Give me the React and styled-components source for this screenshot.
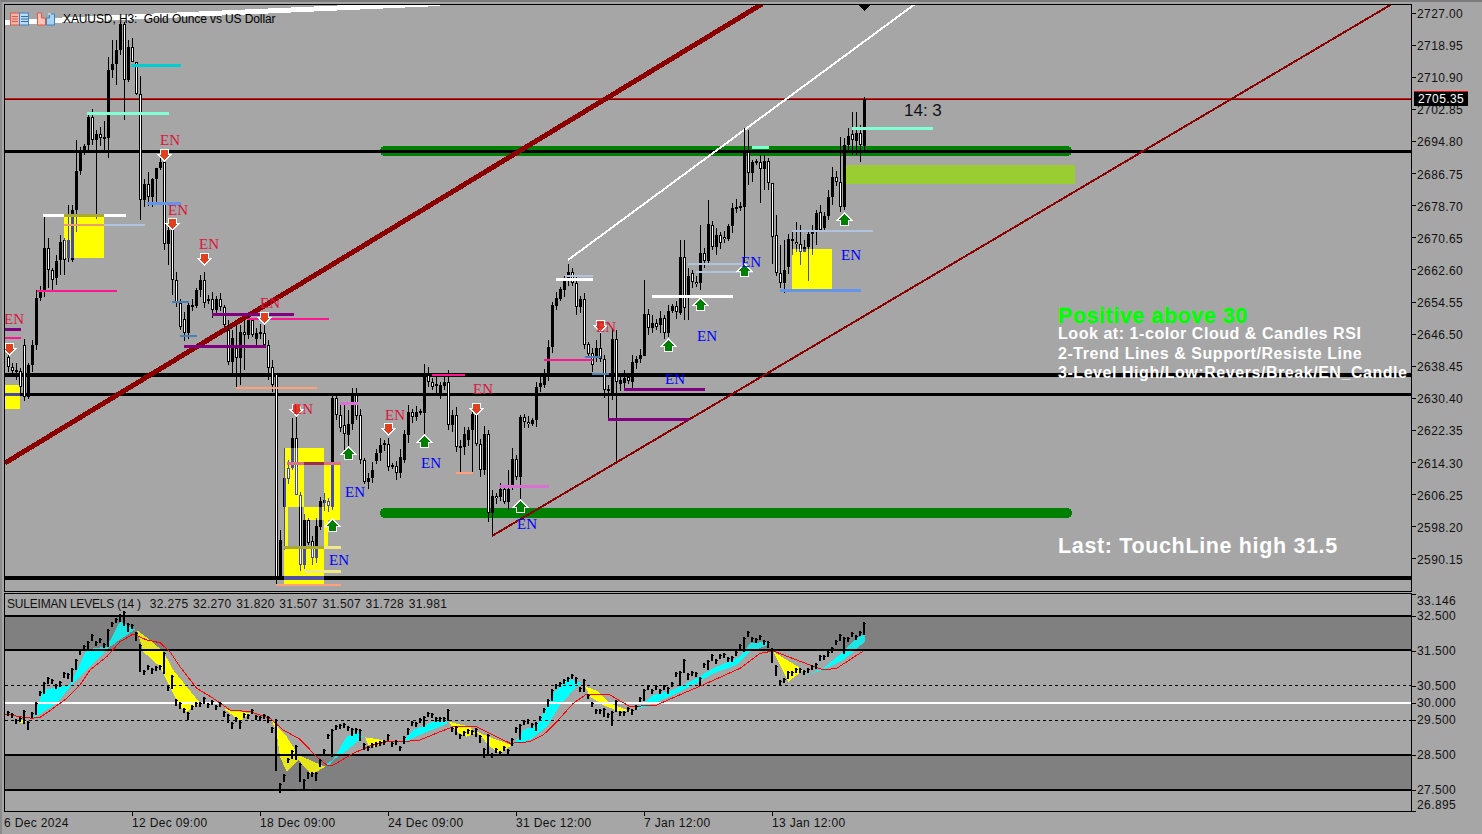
import React from 'react';
import styled, { createGlobalStyle } from 'styled-components';

const GlobalStyle = createGlobalStyle`
  html, body {
    margin: 0;
    height: 100%;
    overflow: hidden;
    background: #a6a6a6;
    font-family: "Liberation Sans", Arial, sans-serif;
    color: #000;
  }
`;

const Terminal = styled.div`
  position: relative;
  box-sizing: border-box;
  width: 1482px;
  height: 834px;
  padding: 2px 0 0 2px;
  background: #a6a6a6;
  border-top: 2px solid #7c7c7c;
  border-left: 2px solid #8c8c8c;
`;

const Inner = styled.div`
  display: flex;
  flex-direction: column;
  gap: 1px;
`;

const PaneRow = styled.div`
  display: flex;
  align-items: stretch;
`;

const Plot = styled.div`
  position: relative;
  box-sizing: border-box;
  flex: none;
  width: 1408px;
  height: ${(p) => p.$height}px;
  border: 1px solid #000;
  overflow: hidden;
`;

const Canvas = styled.svg`
  display: block;
  shape-rendering: crispEdges;
`;

const EnLabel = styled.text`
  font-family: "Liberation Serif", "Times New Roman", serif;
  font-size: 15px;
  text-anchor: middle;
  fill: ${(p) => (p.$buy ? '#0000ff' : '#dc143c')};
`;

const ChartTitle = styled.div`
  position: absolute;
  top: 6px;
  left: 5px;
  display: flex;
  align-items: center;
  gap: 7px;
  font-size: 12px;
  line-height: 16px;
  letter-spacing: -0.1px;
  white-space: pre;
`;

const CountDown = styled.div`
  position: absolute;
  top: 96px;
  left: 899px;
  font-size: 17px;
  line-height: 20px;
  color: #111;
  white-space: pre;
`;

const Notes = styled.div`
  position: absolute;
  top: 304px;
  left: 1053px;
  display: flex;
  flex-direction: column;
  color: #fff;
  font-weight: 700;
  white-space: nowrap;
`;

const NoteHead = styled.div`
  font-size: 21.5px;
  line-height: 15px;
  letter-spacing: 0.55px;
  color: #00ff00;
  -webkit-text-stroke: 0.3px #00ff00;
`;

const NoteLine = styled.div`
  font-size: 16px;
  line-height: 19.5px;
  letter-spacing: 0.55px;
`;

const LastNote = styled.div`
  position: absolute;
  top: 529px;
  left: 1053px;
  font-size: 21.5px;
  line-height: 24px;
  font-weight: 700;
  letter-spacing: 0.65px;
  color: #fff;
  white-space: nowrap;
`;

const Legend = styled.div`
  position: absolute;
  top: 3px;
  left: 2px;
  display: flex;
  gap: 9px;
  font-size: 12px;
  line-height: 14px;
  white-space: pre;
  color: #111;
`;

const LegendName = styled.span`
  letter-spacing: -0.2px;
`;

const LegendValues = styled.span`
  word-spacing: 1px;
  letter-spacing: 0.3px;
`;

const PriceAxis = styled.div`
  position: relative;
  flex: 1;
  display: grid;
  grid-auto-rows: 32.12px;
  margin-top: -6px;
  height: 0;
`;

const AxisLabel = styled.div`
  display: flex;
  align-items: center;
  gap: 1px;
  font-size: 12px;
  letter-spacing: 0.4px;
  color: #111;

  &::before {
    content: '';
    width: 4px;
    height: 1px;
    margin-top: -2px;
    background: #000;
    flex: none;
  }
`;

const PriceTag = styled.div`
  position: absolute;
  top: 93px;
  left: 2px;
  width: 54px;
  height: 14px;
  border-top: 1px solid #ff0000;
  background: #000;
  color: #fff;
  font-size: 12px;
  line-height: 15px;
  letter-spacing: 0.4px;
  text-align: center;
`;

const LevelAxis = styled.div`
  position: relative;
  flex: 1;
`;

const LevelTick = styled.div`
  position: absolute;
  left: 0;
  width: 4px;
  height: 1px;
  background: #000;
`;

const LevelLabel = styled.div`
  position: absolute;
  left: 5px;
  font-size: 12px;
  line-height: 14px;
  letter-spacing: 0.4px;
  color: #111;
`;

const TimeAxis = styled.div`
  display: flex;
  margin-top: -1px;
`;

const TimeLabel = styled.div`
  position: relative;
  flex: none;
  width: 128px;
  box-sizing: border-box;
  padding-top: 4px;
  font-size: 12px;
  line-height: 14px;
  letter-spacing: 0.35px;
  color: #111;
  white-space: nowrap;

  &::before {
    content: ${(p) => (p.$tick ? "''" : 'none')};
    position: absolute;
    top: 0;
    left: 0;
    width: 1px;
    height: 4px;
    background: #000;
  }
`;

// x + colour + body top-bottom, in page pixels
const BAR_DATA = `8w357-367 12w367-371 16b370-372 20w371-387 24w345-397 28b365-397 32b345-365 36b298-345 40b290-298 44b248-290
48w248-270 52w270-280 56b261-278 60b242-260 64w240-260 68b240-258 72b210-260 76b171-210 80b153-171 84b146-153 88b117-145 92w117-140
96b134-140 100w134-138 104b137-139 108b70-138 112b64-70 116b50-64 120b24-50 124w24-80 128b47-80 132w47-62 136w62-94 140w94-200
144b184-200 148w184-197 152b179-197 156b168-179 160b162-168 164w162-244 168b230-244 172w230-280 176w280-302 180w303-327 184w319-333
188b305-333 192b305-307 196b290-306 200b280-290 204w280-303 208b299-301 212w299-310 216b299-310 220w299-307 224w307-325 228w330-362
232b338-362 236w348-358 240b332-358 244w332-335 248b320-335 252w320-335 256b333-339 260b332-334 264w333-345 268w345-368 272w367-385
276w374-577 280b540-577 284b478-507 288w468-479 292b438-468 296w438-495 300w495-565 304b520-565 308w520-543 312w541-558 316b526-558
320b501-527 324b500-503 328w501-506 332b398-507 336w398-415 340w415-428 344w425-434 348b424-435 352b395-424 356w395-416 360w415-460
364w460-482 368b478-482 372b470-478 376b453-461 380b445-453 384b443-445 388w444-467 392b465-467 396w466-473 400b457-473 404b434-460
408b412-435 412w412-417 416b412-417 420b411-413 424b375-413 428w375-382 432w382-387 436b384-386 440b385-393 444b382-386 448w382-425
452b415-425 456w415-447 460b446-448 464b434-447 468b430-440 472b414-430 476w414-444 480w444-470 484b434-470 488w434-513 492b496-513
496w496-498 500b489-497 504w489-502 508b489-502 512b459-487 516w459-477 520b417-477 524w417-422 528w422-424 532b420-424 536b387-420
540b383-387 544b373-385 548b347-373 552b305-347 556b298-306 560b289-299 564b281-290 568b272-281 572w272-283 576w283-307 580b299-307
584w299-345 588w344-354 592w353-365 596b348-357 600w348-359 604w359-390 608b389-391 612b339-393 616w339-382 620b380-384 624b378-383
628w377-381 632b362-382 636b359-363 640b355-359 644b314-356 648w314-328 652b323-328 656w323-327 660b318-325 664w318-333 668b311-333
672b306-311 676w306-312 680b257-313 684w257-308 688b276-298 692w273-282 696w282-283 700b253-283 704w253-261 708b224-261 712w225-247
716b235-247 720w235-243 724w237-239 728b226-239 732b208-226 736b207-208 740b206-208 744b152-207 748w152-173 752b162-173 756b161-163
760w162-169 764b161-169 768w161-183 772w183-237 776w235-273 780w273-283 784b270-283 788b239-267 792b239-241 796w242-244 800w244-252
804b247-252 808b234-247 812b232-234 816b213-232 820w212-230 824b216-228 828b197-216 832b177-197 836w177-182 840w182-207 844b145-207
848b136-145 852w134-140 856b133-141 860w133-145 864b99-146`;

// long wicks read off the chart, the rest get a small generated one
const WICKS = {
  44: [217, 297], 48: [238, 288], 52: [268, 290], 56: [255, 285], 60: [235, 275], 64: [238, 275], 68: [205, 262], 72: [205, 262],
  76: [140, 232], 96: [130, 219], 104: [121, 150], 108: [57, 158], 112: [40, 78], 116: [40, 85], 120: [22, 55], 124: [22, 120],
  128: [40, 82], 132: [38, 62], 136: [76, 95], 140: [76, 220], 148: [172, 206], 152: [178, 207], 156: [172, 205], 160: [158, 170],
  164: [150, 250], 168: [224, 265], 172: [225, 295], 228: [320, 365], 232: [330, 375], 236: [325, 388], 240: [325, 385], 244: [320, 370],
  264: [315, 345], 268: [340, 380], 272: [360, 392], 276: [374, 585], 280: [530, 577], 284: [448, 550], 292: [418, 470], 296: [410, 495],
  332: [395, 510], 336: [393, 420], 340: [405, 432], 344: [405, 450], 348: [410, 455], 352: [388, 430], 356: [388, 420], 424: [364, 437],
  448: [370, 430], 460: [440, 473], 472: [405, 473], 476: [409, 446], 488: [430, 522], 492: [490, 535], 508: [470, 510], 512: [448, 490],
  520: [415, 500], 600: [325, 362], 604: [355, 398], 608: [385, 419], 612: [328, 400], 616: [330, 461], 644: [280, 356], 680: [240, 315],
  684: [240, 320], 688: [268, 320], 700: [225, 290], 708: [200, 263], 744: [128, 270], 748: [130, 185], 752: [160, 182], 760: [155, 203], 764: [155, 190],
  768: [158, 190], 772: [183, 264], 776: [215, 276], 780: [245, 288], 784: [240, 293], 792: [232, 255], 796: [222, 252], 800: [225, 265],
  804: [240, 252], 808: [230, 281], 812: [225, 255], 816: [210, 245], 820: [205, 226], 828: [190, 220], 832: [167, 205], 840: [137, 212],
  844: [138, 210], 852: [112, 155], 856: [112, 155], 860: [125, 162], 864: [97, 150],
};

const bars = BAR_DATA.trim().split(/\s+/).map((token) => {
  const [, x, kind, top, bottom] = token.match(/(\d+)([bw])(\d+)-(\d+)/);
  const px = Number(x);
  const wick = WICKS[px] || [Number(top) - 2 - ((px * 13) % 7), Number(bottom) + 2 + ((px * 17) % 7)];
  return { x: px, kind, top: Number(top), bottom: Number(bottom), hi: wick[0], lo: wick[1] };
});

const YELLOW = [
  [64, 215, 40, 43], [5, 385, 15, 24], [284, 448, 20, 59], [304, 448, 20, 15], [324, 463, 16, 57], [304, 507, 20, 13],
  [284, 507, 4, 41], [324, 520, 4, 28], [284, 548, 40, 37], [792, 249, 40, 40],
];

// x1, x2, y, height, colour
const LEVELS = [
  [131, 181, 64, 3, '#00ced1'], [87, 169, 112, 3, '#7fffd4'], [43, 126, 214, 3, '#ffffff'], [64, 104, 214, 3, '#a8a838'], [104, 145, 224, 2, '#b0c4de'],
  [64, 104, 224, 2, '#e8a070'], [37, 117, 290, 2, '#ff1493'], [5, 21, 328, 3, '#800080'], [5, 21, 337, 2, '#ff1493'],
  [147, 181, 202, 3, '#6495ed'], [172, 189, 301, 2, '#4682b4'], [180, 197, 335, 2, '#4682b4'], [212, 294, 313, 3, '#800080'],
  [184, 266, 345, 3, '#800080'], [248, 329, 318, 2, '#ff1493'], [236, 317, 387, 2, '#ffa07a'], [276, 341, 584, 2, '#ffa07a'],
  [340, 358, 402, 3, '#da70d6'], [287, 304, 462, 3, '#db7093'], [304, 341, 462, 3, '#a02d4a'], [324, 341, 462, 3, '#db7093'],
  [284, 341, 546, 3, '#f0e68c'], [284, 324, 546, 3, '#a8a838'], [304, 341, 570, 3, '#f0e68c'], [432, 465, 374, 2, '#ff1493'],
  [456, 473, 472, 2, '#ffa07a'], [499, 549, 485, 3, '#da70d6'], [544, 593, 359, 2, '#ff1493'], [585, 601, 356, 2, '#4682b4'],
  [592, 609, 373, 2, '#4682b4'], [565, 593, 275, 2, '#b0c4de'], [556, 593, 278, 3, '#ffffff'], [624, 705, 388, 3, '#800080'],
  [608, 689, 418, 3, '#800080'], [652, 733, 295, 3, '#ffffff'], [688, 748, 263, 2, '#b0c4de'], [696, 753, 271, 2, '#b0c4de'],
  [752, 769, 146, 3, '#7fffd4'], [852, 933, 127, 3, '#7fffd4'], [792, 873, 230, 2, '#b0c4de'], [780, 861, 289, 3, '#6495ed'],
  [5, 20, 393, 3, '#4a4aa8'], [284, 324, 576, 4, '#5050a8'],
];

const SELL_ARROWS = [[164, 154], [172, 223], [204, 258], [9, 348], [264, 317], [296, 409], [388, 428], [476, 408], [600, 325]];
const BUY_ARROWS = [[348, 453], [332, 525], [424, 441], [520, 506], [668, 345], [700, 304], [744, 270], [844, 219]];
const SELL_EN = [[170, 145], [178, 215], [209, 249], [14, 324], [270, 308], [303, 414], [395, 420], [483, 394], [606, 332]];
const BUY_EN = [[355, 497], [339, 565], [431, 468], [527, 529], [707, 341], [675, 384], [751, 267], [851, 260]];

const PRICES = Array.from({ length: 18 }, (_, i) => (2727 - i * 8.05).toFixed(2));
const LEVEL_MARKS = ['33.146', '32.500', '31.500', '30.500', '30.000', '29.500', '28.500', '27.500', '26.895'];
const DATES = ['6 Dec 2024', '12 Dec 09:00', '18 Dec 09:00', '24 Dec 09:00', '31 Dec 12:00', '7 Jan 12:00', '13 Jan 12:00'];

// indicator traces, taken from the 3x crop: [x, y] pairs with y counted from 590
const fromCrop = (pairs, shift = 0) => {
  const out = [];
  for (let i = 0; i < pairs.length; i += 2) out.push([(pairs[i] + shift) / 3, 590 + pairs[i + 1] / 3]);
  return out;
};

const SIGNAL = [
  ...fromCrop([15, 372, 60, 380, 95, 385, 120, 382, 150, 362, 200, 325, 240, 285, 270, 240, 320, 200, 360, 155, 400, 132, 440, 150, 480, 158, 510, 185, 540, 230, 590, 295, 640, 325, 690, 360, 750, 365, 810, 385, 850, 420, 900, 448, 950, 500, 980, 525, 1000, 525, 1060, 490, 1110, 468, 1160, 455, 1210, 455, 1260, 450]),
  ...fromCrop([0, 425, 40, 410, 110, 410, 160, 435, 210, 460, 270, 455, 310, 435, 350, 395, 400, 340, 440, 312, 510, 315, 570, 350, 650, 345, 730, 310, 800, 280, 900, 235, 960, 190, 1000, 183, 1070, 210, 1150, 240, 1190, 235, 1270, 183], 1320),
];

const RSI_KEYS = [
  ...fromCrop([15, 375, 60, 395, 80, 405, 100, 360, 130, 280, 170, 285, 215, 240, 240, 180, 270, 150, 320, 165, 325, 110, 360, 75, 375, 90, 405, 130, 420, 245, 460, 235, 490, 225, 495, 290, 515, 290, 525, 345, 560, 375, 580, 340, 610, 340, 660, 350, 680, 400, 720, 395, 750, 370, 800, 390, 825, 450, 830, 605, 850, 560, 880, 470, 900, 575, 945, 560, 960, 510, 995, 420, 1010, 420, 1050, 410, 1075, 440, 1090, 480, 1120, 460, 1160, 450, 1200, 470, 1220, 420, 1270, 380]),
  ...fromCrop([0, 385, 20, 385, 50, 440, 90, 415, 125, 465, 145, 495, 205, 480, 215, 450, 240, 405, 290, 400, 320, 340, 340, 290, 390, 260, 410, 285, 430, 300, 455, 350, 490, 380, 520, 365, 570, 365, 590, 345, 610, 300, 680, 300, 720, 245, 780, 265, 800, 215, 880, 200, 915, 140, 980, 155, 1000, 235, 1020, 285, 1045, 245, 1080, 250, 1130, 220, 1170, 180, 1210, 145, 1270, 135, 1270, 100], 1320),
];

const CLOUDS = [
  ['#00ffff', fromCrop([100, 385, 130, 300, 210, 285, 260, 178, 320, 170, 360, 95, 405, 118, 330, 170, 210, 290, 170, 340])],
  ['#ffff00', fromCrop([50, 390, 80, 390, 75, 398, 60, 398])],
  ['#ffff00', fromCrop([410, 120, 450, 150, 490, 185, 520, 240, 600, 340, 560, 365, 540, 350, 480, 230, 430, 185, 420, 150])],
  ['#ffff00', fromCrop([670, 355, 750, 370, 720, 392, 690, 370])],
  ['#ffff00', fromCrop([815, 390, 860, 440, 895, 495, 975, 530, 935, 555, 895, 510, 860, 545, 840, 500, 830, 430])],
  ['#00ffff', fromCrop([990, 525, 1040, 440, 1075, 425, 1090, 440, 1030, 490, 975, 525])],
  ['#ffff00', fromCrop([1095, 442, 1160, 452, 1125, 470, 1105, 465])],
  ['#00ffff', fromCrop([1205, 458, 1240, 420, 1300, 395, 1340, 390, 1340, 402, 1270, 430, 1215, 455])],
  ['#ffff00', fromCrop([25, 395, 90, 410, 105, 430, 80, 440, 50, 425], 1320)],
  ['#ffff00', fromCrop([110, 425, 145, 440, 215, 465, 180, 490, 150, 470], 1320)],
  ['#00ffff', fromCrop([220, 465, 250, 420, 290, 405, 340, 310, 385, 265, 425, 280, 405, 295, 360, 345, 320, 410, 270, 450], 1320)],
  ['#ffff00', fromCrop([435, 288, 475, 305, 510, 340, 575, 365, 530, 362, 490, 345, 450, 320], 1320)],
  ['#00ffff', fromCrop([585, 360, 640, 315, 700, 300, 760, 270, 820, 235, 900, 200, 930, 160, 985, 155, 985, 165, 930, 185, 890, 225, 820, 250, 760, 285, 700, 315, 640, 340], 1320)],
  ['#ffff00', fromCrop([1000, 185, 1090, 240, 1045, 275], 1320)],
  ['#00ffff', fromCrop([1095, 255, 1150, 235, 1210, 185, 1250, 145, 1275, 130, 1275, 155, 1210, 210, 1150, 240], 1320)],
];

const toPoints = (list) => list.map(([x, y]) => `${x.toFixed(1)},${y.toFixed(1)}`).join(' ');

const rsiAt = (x) => {
  for (let i = 1; i < RSI_KEYS.length; i++) {
    const [x0, y0] = RSI_KEYS[i - 1];
    const [x1, y1] = RSI_KEYS[i];
    if (x <= x1) return x1 === x0 ? y1 : y0 + ((y1 - y0) * (x - x0)) / (x1 - x0);
  }
  return RSI_KEYS[RSI_KEYS.length - 1][1];
};

const levelY = (value) => 616 + (32.5 - value) * 34.8;

const Candles = ({ tint }) => (
  <g>
    {bars.map((b) => {
      const ink = tint || '#000';
      return (
        <g key={b.x}>
          <rect x={b.x} y={b.hi} width="1" height={b.lo - b.hi} fill={ink} />
          <rect x={b.x - 1} y={b.top} width="3" height={Math.max(b.bottom - b.top, 2)} fill={ink} />
          {b.kind === 'w' && <rect x={b.x} y={b.top + 1} width="1" height={Math.max(b.bottom - b.top - 2, 1)} fill="#fff" />}
        </g>
      );
    })}
  </g>
);

const Arrow = ({ x, y, up }) => {
  const cx = x + 0.5;
  const shape = up
    ? `${cx},${y - 6} ${cx + 7},${y + 1} ${cx + 4},${y + 1} ${cx + 4},${y + 6} ${cx - 4},${y + 6} ${cx - 4},${y + 1} ${cx - 7},${y + 1}`
    : `${cx},${y + 7} ${cx + 7},${y} ${cx + 4},${y} ${cx + 4},${y - 5} ${cx - 4},${y - 5} ${cx - 4},${y} ${cx - 7},${y}`;
  return <polygon points={shape} fill={up ? '#008000' : '#e0401e'} stroke="#fff" strokeWidth="1" />;
};

const TitleIcons = () => (
  <svg width="46" height="14" viewBox="0 0 46 14">
    <rect x="0.5" y="1" width="9" height="12" fill="#f7b5a8" stroke="#e0574a" />
    <rect x="9.5" y="1" width="9" height="12" fill="#bcdcf0" stroke="#3a82c0" />
    <path d="M2 4.5h6M2 7h6M2 9.5h6" stroke="#e0574a" />
    <path d="M11 4.5h7M11 7h7M11 9.5h7" stroke="#2f6fa8" />
    <path d="M27.5 1v12h8V6h-4V1z" fill="#fbc4b8" stroke="#e0574a" />
    <path d="M36.5 13V6h3V2h5v11z" fill="#a8d4f0" stroke="#3a82c0" />
    <path d="M38 2h3" stroke="#fff" />
  </svg>
);

const MainChart = () => (
  <Canvas width="1406" height="586" viewBox="5 5 1406 586">
    <defs>
      <clipPath id="yellow-zones">
        {YELLOW.map(([x, y, w, h]) => <rect key={`${x}-${y}`} x={x} y={y} width={w} height={h} />)}
      </clipPath>
    </defs>
    <line x1="5" y1="22.5" x2="440" y2="3.5" stroke="#fff" strokeWidth="5" />
    {YELLOW.map(([x, y, w, h]) => <rect key={`${x}-${y}`} x={x} y={y} width={w} height={h} fill="#ffff00" />)}
    <rect x="844" y="165" width="231" height="19" fill="#9acd32" />
    <rect x="380" y="146" width="692" height="10" rx="5" fill="#008000" />
    <rect x="380" y="508" width="692" height="10" rx="5" fill="#008000" />
    <rect x="5" y="98" width="1406" height="1" fill="#ff0000" />
    <rect x="5" y="99" width="1406" height="1" fill="#401010" />
    <rect x="5" y="150" width="1406" height="3" fill="#000" />
    <rect x="5" y="373" width="1406" height="4" fill="#000" />
    <rect x="5" y="393" width="1406" height="3" fill="#000" />
    <rect x="5" y="576" width="1406" height="4" fill="#000" />
    <line x1="5" y1="463" x2="762" y2="4" stroke="#8b0000" strokeWidth="5" />
    <line x1="492" y1="536" x2="1392" y2="4" stroke="#8b0000" strokeWidth="2" />
    <line x1="568" y1="260" x2="915" y2="4" stroke="#fff" strokeWidth="2" />
    <Candles />
    <g clipPath="url(#yellow-zones)">
      <Candles tint="#4a4aa8" />
    </g>
    {LEVELS.map(([x1, x2, y, h, color]) => (
      <rect key={`${x1}-${y}-${color}`} x={x1} y={y} width={x2 - x1} height={h} fill={color} />
    ))}
    <polygon points="858,5 870,5 864,11" fill="#000" />
    {SELL_ARROWS.map(([x, y]) => <Arrow key={x} x={x} y={y} />)}
    {BUY_ARROWS.map(([x, y]) => <Arrow key={x} x={x} y={y} up />)}
    {SELL_EN.map(([x, y]) => <EnLabel key={x} x={x} y={y}>EN</EnLabel>)}
    {BUY_EN.map(([x, y]) => <EnLabel key={x} x={x} y={y} $buy>EN</EnLabel>)}
  </Canvas>
);

const LevelsChart = () => (
  <Canvas width="1406" height="217" viewBox="5 594 1406 217">
    <rect x="5" y="616" width="1406" height="34" fill="#808080" />
    <rect x="5" y="755" width="1406" height="35" fill="#808080" />
    {CLOUDS.map(([color, points], i) => <polygon key={i} points={toPoints(points)} fill={color} />)}
    <rect x="5" y="616" width="1406" height="34" fill="#808080" opacity="0.2" />
    <rect x="5" y="755" width="1406" height="35" fill="#808080" opacity="0.2" />
    <rect x="5" y="615" width="1406" height="2" fill="#000" />
    <rect x="5" y="649" width="1406" height="2" fill="#000" />
    <rect x="5" y="754" width="1406" height="2" fill="#000" />
    <rect x="5" y="789" width="1406" height="2" fill="#000" />
    <line x1="5" y1="685.5" x2="1411" y2="685.5" stroke="#000" strokeDasharray="3 3" />
    <line x1="5" y1="720.5" x2="1411" y2="720.5" stroke="#000" strokeDasharray="3 3" />
    <rect x="5" y="702" width="1406" height="2" fill="#fff" />
    <polyline points={toPoints(SIGNAL)} fill="none" stroke="#ff0000" strokeWidth="1" />
    {bars.map((b) => {
      const len = Math.max(4, (b.bottom - b.top) * 0.25);
      const close = rsiAt(b.x);
      const top = Math.max(b.kind === 'b' ? close : close - len, 612);
      return (
        <g key={b.x} fill="#000">
          <rect x={b.x - 1} y={Math.round(top - 1)} width="2" height={Math.round(len + 1)} />
          <rect x={b.x + 1} y={Math.round(top)} width="1" height="1" />
        </g>
      );
    })}
  </Canvas>
);

export default function App() {
  return (
    <Terminal>
      <GlobalStyle />
      <Inner>
        <PaneRow>
          <Plot $height={588}>
            <MainChart />
            <ChartTitle>
              <TitleIcons />
              <span>XAUUSD, H3:  Gold Ounce vs US Dollar</span>
            </ChartTitle>
            <CountDown>14: 3</CountDown>
            <Notes>
              <NoteHead>Positive above 30</NoteHead>
              <NoteLine>Look at: 1-color Cloud &amp; Candles RSI</NoteLine>
              <NoteLine>2-Trend Lines &amp; Support/Resiste Line</NoteLine>
              <NoteLine>3-Level High/Low:Revers/Break/EN_Candle</NoteLine>
            </Notes>
            <LastNote>Last: TouchLine high 31.5</LastNote>
          </Plot>
          <PriceAxis>
            {PRICES.map((price) => <AxisLabel key={price}>{price}</AxisLabel>)}
            <PriceTag>2705.35</PriceTag>
          </PriceAxis>
        </PaneRow>
        <PaneRow>
          <Plot $height={219}>
            <LevelsChart />
            <Legend>
              <LegendName>SULEIMAN LEVELS (14 )</LegendName>
              <LegendValues>32.275 32.270 31.820 31.507 31.507 31.728 31.981</LegendValues>
            </Legend>
          </Plot>
          <LevelAxis>
            {LEVEL_MARKS.map((mark) => {
              const y = Math.min(Math.max(levelY(Number(mark)), 594), 811) - 593;
              const labelTop = Math.min(Math.max(y, 8), 212) - 7;
              return (
                <React.Fragment key={mark}>
                  <LevelTick style={{ top: y }} />
                  <LevelLabel style={{ top: labelTop }}>{mark}</LevelLabel>
                </React.Fragment>
              );
            })}
          </LevelAxis>
        </PaneRow>
        <TimeAxis>
          {DATES.map((date, i) => <TimeLabel key={date} $tick={i > 0}>{date}</TimeLabel>)}
        </TimeAxis>
      </Inner>
    </Terminal>
  );
}
